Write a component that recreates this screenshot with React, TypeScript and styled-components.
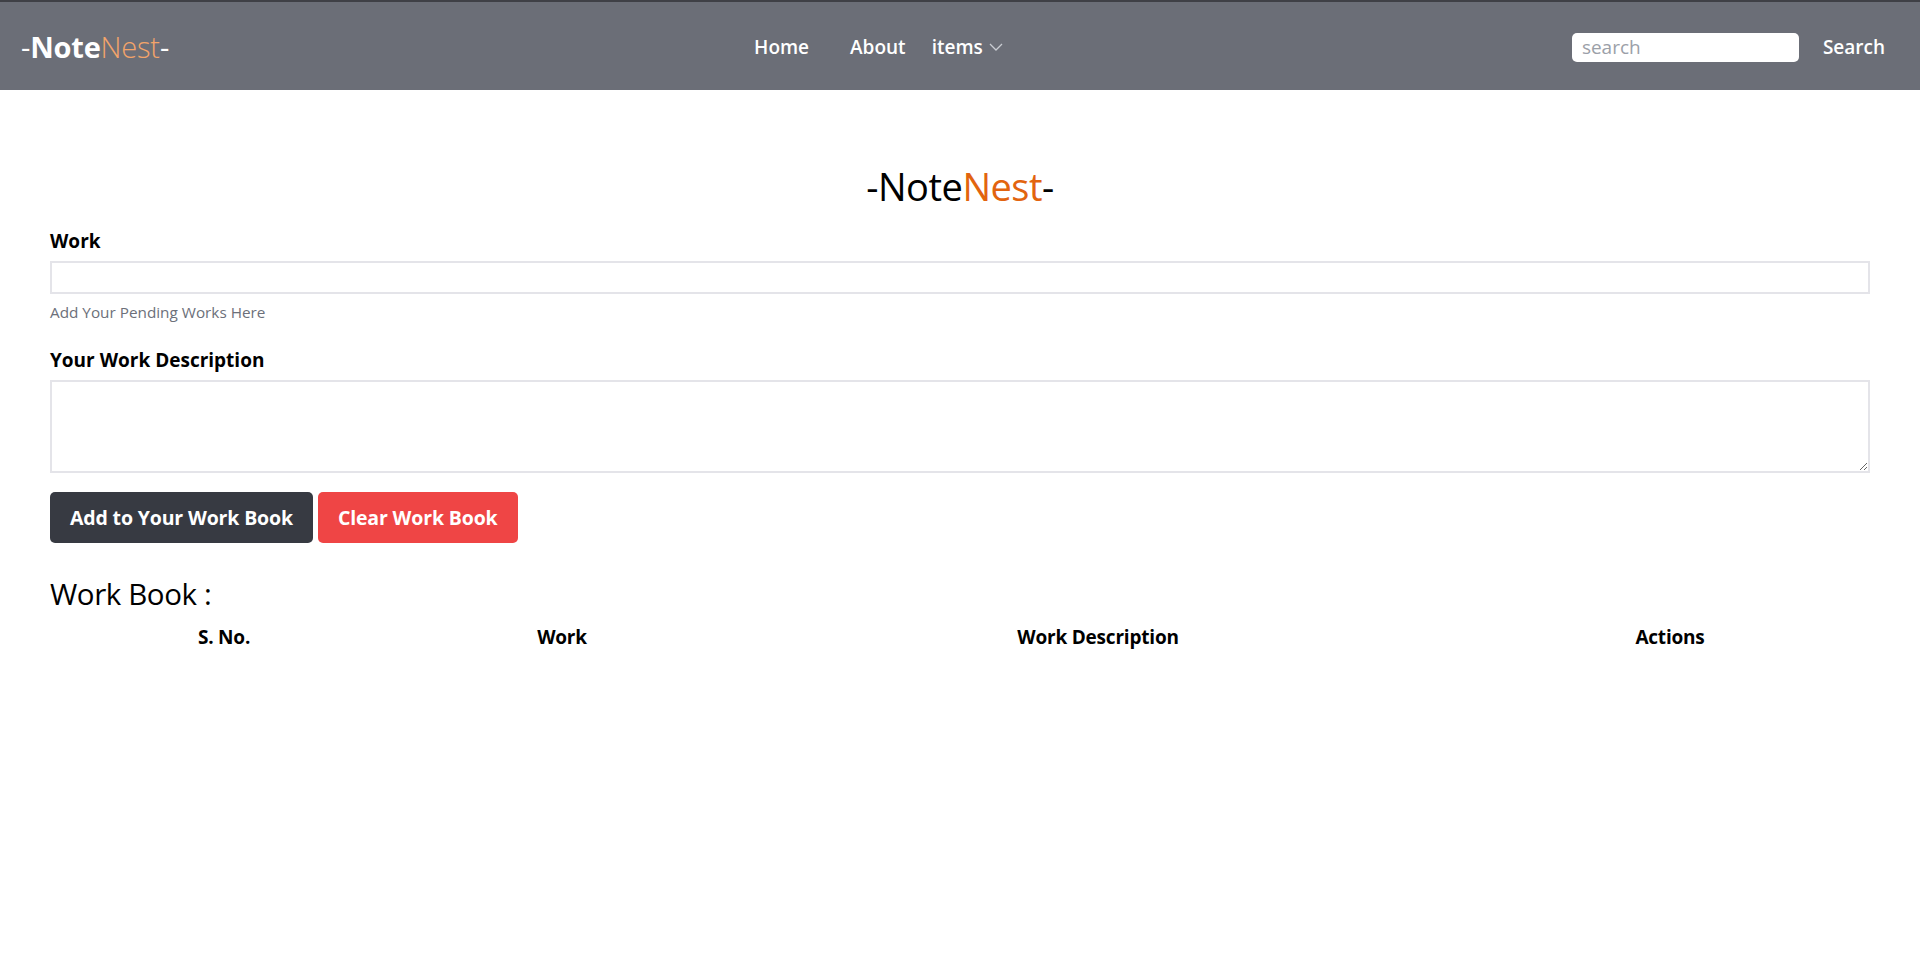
import React from "react";
import styled, { createGlobalStyle } from "styled-components";

const Global = createGlobalStyle`
  html, body { margin: 0; padding: 0; background: #fff; }
  body { font-family: "Open Sans", "Noto Sans", "Liberation Sans", sans-serif; color: #000; }
  * { box-sizing: border-box; }
`;

const Nav = styled.nav`
  height: 90px;
  background: #6b6e77;
  border-top: 2px solid #3f4046;
  display: flex;
  align-items: center;
  padding: 2px 35px 0 21px;
`;

const Brand = styled.div`
  font-size: 29px;
  color: #fff;
  letter-spacing: -0.2px;
  padding-bottom: 2px;
`;

const BrandBold = styled.span`
  font-weight: 700;
`;

const BrandAccent = styled.span<{ $light?: boolean }>`
  color: ${(p) => (p.$light ? "#f3a46a" : "#e2640f")};
  font-weight: ${(p) => (p.$light ? 300 : 400)};
`;

const NavLinks = styled.ul`
  list-style: none;
  margin: 0 auto;
  padding: 0;
  display: flex;
  align-items: center;
  position: relative;
  left: 8px;
`;

const NavItem = styled.li<{ $gap: number }>`
  margin-right: ${(p) => p.$gap}px;
  font-size: 19px;
  font-weight: 600;
  color: #fff;
  display: flex;
  align-items: center;
  gap: 6px;
`;

const SearchForm = styled.form`
  display: flex;
  align-items: center;
  gap: 24px;
`;

const SearchInput = styled.input`
  width: 227px;
  height: 29px;
  border: none;
  border-radius: 5px;
  padding: 0 10px;
  font-family: inherit;
  font-size: 19px;
  &::placeholder { color: #9ba0a8; }
`;

const SearchButton = styled.button`
  background: transparent;
  border: none;
  color: #fff;
  font-family: inherit;
  font-size: 19px;
  font-weight: 600;
  padding: 0;
`;

const Main = styled.main`
  padding: 0 50px;
`;

const Title = styled.h2`
  margin: 0;
  padding-top: 70px;
  text-align: center;
  font-size: 38px;
  font-weight: 400;
  line-height: 52px;
  letter-spacing: -0.5px;
`;

const Field = styled.div<{ $mt: number }>`
  margin-top: ${(p) => p.$mt}px;
`;

const Label = styled.label`
  display: block;
  font-size: 19px;
  font-weight: 700;
  line-height: 26px;
  margin-bottom: 7px;
`;

const TextInput = styled.input`
  display: block;
  width: 100%;
  height: 33px;
  border: 2px solid #e4e4e9;
  font-family: inherit;
  font-size: 19px;
  padding: 0 8px;
`;

const Help = styled.div`
  font-size: 15.3px;
  color: #6c707a;
  margin-top: 8px;
  line-height: 20px;
`;

const TextArea = styled.textarea`
  display: block;
  width: 100%;
  height: 93px;
  border: 2px solid #e4e4e9;
  font-family: inherit;
  font-size: 19px;
  padding: 6px 8px;
  resize: vertical;
`;

const Buttons = styled.div`
  display: flex;
  gap: 5px;
  margin-top: 19px;
`;

const Button = styled.button<{ $variant: "dark" | "danger" }>`
  height: 51px;
  border: none;
  border-radius: 5px;
  padding: 0 20px;
  font-family: inherit;
  font-size: 19.5px;
  font-weight: 700;
  color: #fff;
  letter-spacing: -0.15px;
  background: ${(p) => (p.$variant === "dark" ? "#373a42" : "#ef4545")};
`;

const SubTitle = styled.h3`
  margin: 31px 0 0;
  font-size: 29.5px;
  font-weight: 400;
  line-height: 40px;
  letter-spacing: -0.4px;
`;

const TableHead = styled.div`
  display: grid;
  grid-template-columns: 348px 328px 744px 400px;
  margin-top: 4px;
`;

const Th = styled.div`
  text-align: center;
  font-size: 19px;
  font-weight: 700;
  line-height: 26px;
  padding: 6px 0;
  letter-spacing: -0.2px;
`;

const Chevron = () => (
  <svg width="14" height="9" viewBox="0 0 14 9" fill="none">
    <polyline points="1,1 7,7 13,1" stroke="#c9ccd2" strokeWidth="1.3" />
  </svg>
);

export default function App() {
  return (
    <>
      <Global />
      <Nav>
        <Brand>
          -<BrandBold>Note</BrandBold>
          <BrandAccent $light>Nest</BrandAccent>-
        </Brand>
        <NavLinks>
          <NavItem $gap={41}>Home</NavItem>
          <NavItem $gap={26}>About</NavItem>
          <NavItem $gap={0}>
            items <Chevron />
          </NavItem>
        </NavLinks>
        <SearchForm onSubmit={(e) => e.preventDefault()}>
          <SearchInput placeholder="search" />
          <SearchButton type="submit">Search</SearchButton>
        </SearchForm>
      </Nav>
      <Main>
        <Title>
          -Note<BrandAccent>Nest</BrandAccent>-
        </Title>
        <Field $mt={16}>
          <Label>Work</Label>
          <TextInput />
          <Help>Add Your Pending Works Here</Help>
        </Field>
        <Field $mt={25}>
          <Label>Your Work Description</Label>
          <TextArea />
        </Field>
        <Buttons>
          <Button $variant="dark">Add to Your Work Book</Button>
          <Button $variant="danger">Clear Work Book</Button>
        </Buttons>
        <SubTitle>Work Book :</SubTitle>
        <TableHead>
          <Th>S. No.</Th>
          <Th>Work</Th>
          <Th>Work Description</Th>
          <Th>Actions</Th>
        </TableHead>
      </Main>
    </>
  );
}
